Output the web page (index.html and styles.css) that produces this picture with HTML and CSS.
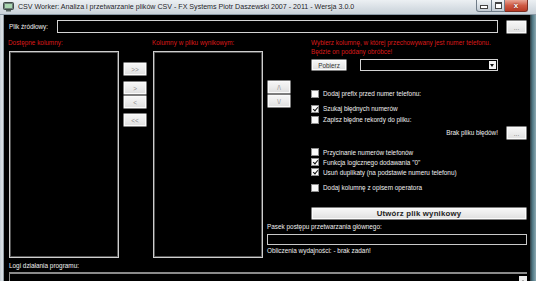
FILE: index.html
```html
<!DOCTYPE html>
<html>
<head>
  <meta charset="UTF-8">
  <title>CSV Worker</title>
  <link rel="stylesheet" href="styles.css">
</head>
<body>
<div class="window">
  <div class="titlebar">
    <svg class="app-icon" width="11" height="10" viewBox="0 0 11 10">
      <rect x="0.5" y="0.5" width="10" height="7" rx="1" fill="#6f7f7a" stroke="#3e4a46"/>
      <rect x="2" y="2" width="7" height="4" fill="#a9d6b0"/>
      <rect x="3" y="8" width="5" height="1.5" fill="#55625e"/>
    </svg>
    <span class="title">CSV Worker: Analiza i przetwarzanie plików CSV - FX Systems Piotr Daszewski 2007 - 2011 - Wersja 3.0.0</span>
    <div class="caption-btns">
      <span class="cap cap-min"><i></i></span>
      <span class="cap cap-max"><i></i></span>
      <span class="cap cap-close">x</span>
    </div>
  </div>
  <div class="frame">
    <div class="client">
      <div class="row-source">
        <span class="lbl src-lbl">Plik źródłowy:</span>
        <div class="field src-field"></div>
        <button class="btn btn-dots">...</button>
      </div>

      <div class="main">
        <div class="col-list">
          <div class="lbl red">Dostępne kolumny:</div>
          <div class="listbox"></div>
        </div>
        <div class="move-btns">
          <button class="btn btn-arrow">&gt;&gt;</button>
          <div class="btn-pair">
            <button class="btn btn-arrow">&gt;</button>
            <button class="btn btn-arrow">&lt;</button>
          </div>
          <button class="btn btn-arrow">&lt;&lt;</button>
        </div>
        <div class="col-list col-out">
          <div class="lbl red">Kolumny w pliku wynikowym:</div>
          <div class="listbox"></div>
        </div>

        <div class="right">
          <div class="right-top">
            <div class="order-btns">
              <button class="btn btn-arrow">/\</button>
              <button class="btn btn-arrow">\/</button>
            </div>
            <div class="panel">
              <div class="lbl red two-line">Wybierz kolumnę, w której przechowywany jest numer telefonu.<br>Będzie on poddany obróbce!</div>
              <div class="row-pick">
                <button class="btn btn-pick">Pobierz</button>
                <div class="field combo"><span class="combo-arrow"></span></div>
              </div>
              <div class="chk first"><span class="box"></span>Dodaj prefix przed numer telefonu:</div>
              <div class="chk gap4"><span class="box on"></span>Szukaj błędnych numerów</div>
              <div class="chk"><span class="box"></span>Zapisz błędne rekordy do pliku:</div>
              <div class="row-errfile">
                <span class="lbl">Brak pliku błędów!</span>
                <button class="btn btn-dots">...</button>
              </div>
              <div class="chk tight gap7"><span class="box"></span>Przycinanie numerów telefonów</div>
              <div class="chk tight"><span class="box on"></span>Funkcja logicznego dodawania "0"</div>
              <div class="chk tight"><span class="box on"></span>Usuń duplikaty (na podstawie numeru telefonu)</div>
              <div class="chk gap5"><span class="box"></span>Dodaj kolumnę z opisem operatora</div>
              <button class="btn btn-make">Utwórz plik wynikowy</button>
            </div>
          </div>
          <div class="progress">
            <div class="lbl">Pasek postępu przetwarzania głównego:</div>
            <div class="field bar"></div>
            <div class="lbl stats">Obliczenia wydajności: - brak zadań!</div>
          </div>
        </div>
      </div>

      <div class="logs">
        <div class="lbl">Logi działania programu:</div>
        <div class="logbox"><span class="scroll-up"></span></div>
      </div>
    </div>
  </div>
</div>
</body>
</html>
```

FILE: styles.css
```css
html, body {margin: 0; padding: 0; background: #000;}
body {font-family: "Liberation Sans", Arial, sans-serif; font-size: 6.4px; color: #f0f0f0;}

.window {width: 536px; height: 281px; overflow: hidden; display: flex; flex-direction: column; background: #cfd7de;}

/* title bar */
.titlebar {
	height: 15px;
	display: flex;
	align-items: center;
	background: linear-gradient(#ecf0f3, #d6dde3 60%, #c9d2d9);
	border-bottom: 1px solid #8a98a4;
	box-sizing: border-box;
}
.app-icon {margin: 0 4px 0 3px;}
.title {font-size: 7.1px; color: #1c2328; white-space: nowrap; text-shadow: 0 0 3px #fff;}
.caption-btns {margin-left: auto; display: flex; align-self: flex-start; margin-right: 8px;}
.cap {
	height: 12px;
	box-sizing: border-box;
	border: 1px solid #6f7c88;
	border-top: 0;
	background: linear-gradient(#f2f5f7, #d9e0e6 50%, #c3ccd4);
	display: flex;
	align-items: center;
	justify-content: center;
}
.cap-min {width: 16px; border-radius: 0 0 0 3px;}
.cap-min i {width: 6px; height: 2px; background: #fff; border: 1px solid #444; margin-top: 3px;}
.cap-max {width: 13px; border-left: 0;}
.cap-max i {width: 5px; height: 4px; border: 1px solid #444; border-top-width: 2px; background: #fff;}
.cap-close {
	width: 23px;
	border-left: 0;
	border-color: #7a2f24;
	border-radius: 0 0 3px 0;
	background: linear-gradient(#e9a595, #cf5a44 50%, #b83a25);
	color: #fff;
	font-weight: bold;
	font-size: 8px;
	line-height: 1;
	text-shadow: 0 0 2px #4a1008;
}

/* frame */
.frame {flex: 1; display: flex; min-height: 0;}
.frame:before {content: ""; width: 4px; background: linear-gradient(90deg, #c3ccd3, #dfe5ea 60%, #6d7a84);}
.frame:after {content: ""; width: 6px; background: linear-gradient(90deg, #2d3b40, #4d7480 40%, #8aa9b2);}
.client {flex: 1; background: #000; padding: 5px 3px 0 5px; display: flex; flex-direction: column; min-width: 0;}

.lbl {line-height: 10px; white-space: nowrap;}
.red {color: #dc1a1a;}

/* buttons */
.btn {
	font-family: inherit;
	font-size: 6.4px;
	padding: 0;
	margin: 0;
	height: 14px;
	box-sizing: border-box;
	border: 1px solid #7d7d7d;
	border-radius: 1px;
	background: linear-gradient(#f7f7f7, #ececec 50%, #dedede);
	color: #555;
	box-shadow: inset 0 0 0 1px #fbfbfb;
}
.btn-dots {width: 21px; color: #777; flex: none;}
.btn-arrow {width: 24px; display: block; color: #8d8d8d;}
.btn-pick {width: 36px; height: 12px; color: #333;}
.btn-make {
	display: block;
	width: 100%;
	height: 13px;
	margin-top: 14px;
	font-size: 7.8px;
	font-weight: bold;
	color: #222;
	letter-spacing: 0.2px;
}

.field {border: 1px solid #d4d4d4; background: #000; box-sizing: border-box;}

/* source row */
.row-source {display: flex; align-items: flex-start; height: 14px;}
.src-lbl {width: 48px; line-height: 14px;}
.src-field {width: 441px; height: 13px; margin-right: 8px;}

/* main area */
.main {display: flex; margin-top: 4px;}
.col-list {width: 110px; display: flex; flex-direction: column;}
.col-list .lbl {margin-left: -1px;}
.listbox {
	height: 207px;
	margin-top: 3px;
	box-sizing: border-box;
	border: 1px solid #cfcfcf;
	box-shadow: inset 0 0 0 1px #555;
}
.move-btns {width: 24px; margin: 24px 6px 0 4px; display: flex; flex-direction: column; gap: 5px;}
.btn-pair {display: flex; flex-direction: column;}
.move-btns .btn-pair + .btn {margin-top: -1px;}

.right {margin-left: 4px; flex: 1; display: flex; flex-direction: column;}
.right-top {display: flex;}
.order-btns {width: 24px; margin-top: 42px;}
.panel {flex: 1; margin-left: 20px;}
.two-line {line-height: 9px;}

.row-pick {display: flex; margin-top: 3px; gap: 13px;}
.combo {width: 138px; height: 12px; position: relative;}
.combo-arrow {
	position: absolute;
	right: 1px;
	top: 1px;
	width: 7px;
	height: 8px;
	background: #f2f2f2;
}
.combo-arrow:after {
	content: "";
	position: absolute;
	left: 1px;
	top: 3px;
	border: 2.5px solid transparent;
	border-top: 3px solid #111;
}

.chk {display: flex; align-items: center; height: 11px; gap: 4px; white-space: nowrap;}
.chk.first {margin-top: 17px;}
.chk.gap4 {margin-top: 4px;}
.chk.gap7 {margin-top: 7px;}
.chk.gap5 {margin-top: 5px;}
.chk.tight {height: 10px;}
.box {
	width: 8px;
	height: 8px;
	box-sizing: border-box;
	border: 1px solid #8e8e8e;
	background: #fafafa;
	flex: none;
	position: relative;
}
.box.on:after {
	content: "";
	position: absolute;
	left: 2px;
	top: 0;
	width: 2px;
	height: 4px;
	border: solid #111;
	border-width: 0 1.5px 1.5px 0;
	transform: rotate(40deg);
}

.row-errfile {display: flex; align-items: center; justify-content: flex-end; gap: 8px; margin-top: 1px;}

.progress {margin-top: 2px;}
.bar {height: 11px; margin-top: 2px; border-color: #c8c8c8;}
.stats {margin-top: 1px;}

/* logs */
.logs {margin-top: 3px; flex: 1; display: flex; flex-direction: column;}
.logbox {
	flex: 1;
	border-top: 2px solid #8a8a8a;
	border-left: 1px solid #8a8a8a;
	position: relative;
	margin-top: 1px;
}
.scroll-up {
	position: absolute;
	right: 0;
	top: 2px;
	width: 8px;
	height: 8px;
	background: #ececec;
}
.scroll-up:after {
	content: "";
	position: absolute;
	left: 2px;
	top: 2px;
	border: 2px solid transparent;
	border-bottom: 2px solid #666;
}
```
